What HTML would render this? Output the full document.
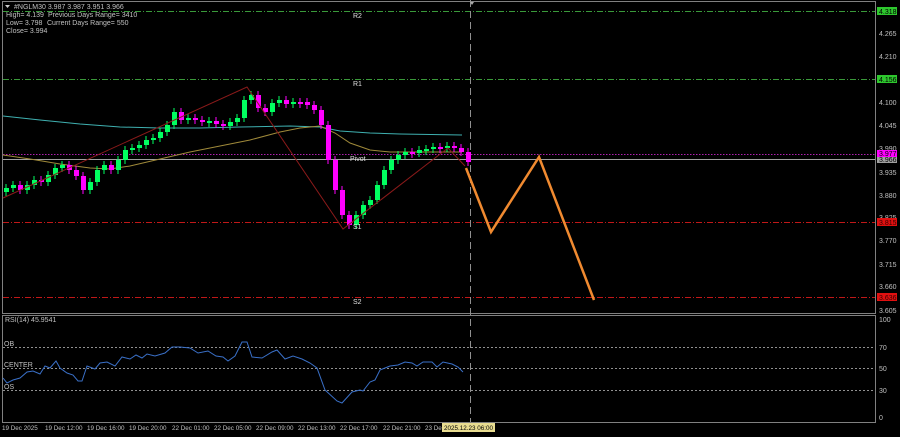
<!DOCTYPE html>
<html><head><meta charset="utf-8"><style>
html,body{margin:0;padding:0;background:#000;width:900px;height:437px;overflow:hidden}
svg{display:block;font-family:"Liberation Sans",Tahoma,sans-serif}
text{fill:#c0c0c0;font-size:7px}
.t text{font-size:6.3px}
</style></head><body>
<svg id="s" width="900" height="437" viewBox="0 0 900 437">
<rect width="900" height="437" fill="#000"/>
<rect x="2.5" y="1.5" width="873" height="312" fill="none" stroke="#808080" stroke-width="1"/>
<rect x="2.5" y="315.5" width="873" height="107" fill="none" stroke="#808080" stroke-width="1"/>
<g stroke-width="1" fill="none">
<line x1="3" y1="11.5" x2="875" y2="11.5" stroke="#3a9a3a" stroke-dasharray="6,2,1,2"/>
<line x1="3" y1="79.5" x2="875" y2="79.5" stroke="#3a9a3a" stroke-dasharray="6,2,1,2"/>
<line x1="3" y1="154.5" x2="875" y2="154.5" stroke="#b020b0" stroke-dasharray="1.5,1.5"/>
<line x1="3" y1="159.5" x2="875" y2="159.5" stroke="#a0a0a0"/>
<line x1="3" y1="222.5" x2="875" y2="222.5" stroke="#c01818" stroke-dasharray="6,2,1,2"/>
<line x1="3" y1="297.5" x2="875" y2="297.5" stroke="#c01818" stroke-dasharray="6,2,1,2"/>
<line x1="470.5" y1="0" x2="470.5" y2="422" stroke="#909090" stroke-dasharray="7,4"/>
<line x1="3" y1="347.5" x2="875" y2="347.5" stroke="#909090" stroke-dasharray="2,2"/>
<line x1="3" y1="368.5" x2="875" y2="368.5" stroke="#909090" stroke-dasharray="2,2"/>
<line x1="3" y1="390.5" x2="875" y2="390.5" stroke="#909090" stroke-dasharray="2,2"/>
</g>
<polygon points="470,2 474,2 472,5" fill="#aaa"/>
<polyline fill="none" stroke="#3fb0b0" stroke-width="1" points="3,116 40,120 80,124 120,127 160,128 200,128 240,127 290,126 320,127 340,131 370,133 400,134 462,135"/>
<polyline fill="none" stroke="#a08a3a" stroke-width="1" points="3,155 30,159 60,164 90,168 110,169 130,166 160,159 190,152 220,146 250,140 280,132 300,128 320,126 335,133 350,143 370,150 390,152 430,152 462,152"/>
<g id="candles"></g>
<polyline fill="none" stroke="#8b1a1a" stroke-width="1" points="3,198 247,87 343,229 448,148 465,166"/>
<polyline fill="none" stroke="#f08a30" stroke-width="2.5" points="466,168 491,232 539,157 594,300"/>
<text x="353" y="18" style="fill:#e0e0e0">R2</text>
<text x="353" y="86" style="fill:#e0e0e0">R1</text>
<text x="350" y="161" style="fill:#e0e0e0">Pivot</text>
<text x="353" y="229" style="fill:#e0e0e0">S1</text>
<text x="353" y="304" style="fill:#e0e0e0">S2</text>
<polygon points="5,5 10,5 7.5,8" fill="#ccc"/>
<text x="14" y="9">#NGLM30  3.987 3.987 3.951 3.966</text>
<text x="6" y="17">High= 4.139</text><text x="48" y="17">Previous Days Range= 3410</text>
<text x="6" y="25">Low= 3.798</text><text x="47" y="25">Current Days Range= 550</text>
<text x="6" y="33">Close= 3.994</text>
<g>
<text x="879" y="36">4.265</text><text x="879" y="59">4.210</text>
<text x="879" y="105">4.100</text><text x="879" y="128">4.045</text>
<text x="879" y="151">3.990</text><text x="879" y="175">3.935</text>
<text x="879" y="198">3.880</text><text x="879" y="220">3.825</text>
<text x="879" y="243">3.770</text><text x="879" y="267">3.715</text>
<text x="879" y="289">3.660</text><text x="879" y="313">3.605</text>
<rect x="877" y="7" width="20" height="8" fill="#2ec82e"/><text x="879" y="14" style="fill:#000">4.318</text>
<rect x="877" y="75" width="20" height="8" fill="#2ec82e"/><text x="879" y="82" style="fill:#000">4.156</text>
<rect x="877" y="150" width="20" height="7" fill="#ff00ff"/><text x="879" y="156" style="fill:#000">3.977</text>
<rect x="877" y="157" width="20" height="6" fill="#a0a0a0"/><text x="879" y="162" style="fill:#000">3.966</text>
<rect x="877" y="218" width="20" height="8" fill="#e01010"/><text x="879" y="225" style="fill:#300">3.815</text>
<rect x="877" y="293" width="20" height="8" fill="#e01010"/><text x="879" y="300" style="fill:#300">3.636</text>
<text x="879" y="322">100</text><text x="879" y="350">70</text>
<text x="879" y="371">50</text><text x="879" y="393">30</text><text x="879" y="420">0</text>
</g>
<text x="5" y="322">RSI(14) 45.9541</text>
<text x="4" y="346">OB</text><text x="4" y="367">CENTER</text><text x="4" y="389">OS</text>
<polyline fill="none" stroke="#3a70c8" stroke-width="1" points="3,378 7,383 13,380 20,378 27,372 33,371 40,374 45,366 50,368 56,361 60,368 67,373 73,375 78,381 82,381 87,366 95,369 100,363 107,362 115,366 122,357 130,359 136,355 142,358 147,354 155,356 165,353 172,347 180,347 190,348 198,353 208,351 216,356 223,357 228,361 235,356 242,342 247,342 252,357 262,358 272,352 277,350 285,359 293,356 302,359 310,363 317,368 325,390 337,401 342,403 352,392 360,390 363,391 370,382 375,380 380,370 390,366 398,365 405,362 412,363 417,366 423,362 432,362 437,367 443,362 452,364 458,367 463,372"/>
<g class="t">
<text x="2" y="430">19 Dec 2025</text><text x="45" y="430">19 Dec 12:00</text>
<text x="87" y="430">19 Dec 16:00</text><text x="129" y="430">19 Dec 20:00</text>
<text x="172" y="430">22 Dec 01:00</text><text x="214" y="430">22 Dec 05:00</text>
<text x="256" y="430">22 Dec 09:00</text><text x="298" y="430">22 Dec 13:00</text>
<text x="340" y="430">22 Dec 17:00</text><text x="383" y="430">22 Dec 21:00</text>
<text x="425" y="430">23 Dec</text>
<rect x="442" y="423" width="53" height="9" fill="#e8dc90"/>
<text x="444" y="430" style="fill:#000">2025.12.23 06:00</text>
</g>
</svg>
<script>
var c=[188,185,190,185,180,182,175,168,165,170,176,190,182,170,165,170,160,150,148,145,140,138,132,125,112,120,118,120,122,121,124,126,122,118,100,95,108,112,103,100,104,102,102,105,110,125,160,190,215,225,215,205,200,185,170,160,155,152,153,150,149,147,148,146,148,152,162];
var g=document.getElementById('candles'),h='',prev=192;
for(var i=0;i<c.length;i++){var x=6+i*7,o=prev,cl=c[i],t=Math.min(o,cl),b=Math.max(o,cl);
if(b-t<2)b=t+2;var col=cl<o?'#00ff60':'#ff00ff';
h+='<line x1="'+x+'" x2="'+x+'" y1="'+(t-4)+'" y2="'+(b+4)+'" stroke="'+col+'" stroke-width="1"/>';
h+='<rect x="'+(x-2)+'" y="'+t+'" width="5" height="'+(b-t)+'" fill="'+col+'"/>';prev=cl;}
g.innerHTML=h;
</script>
</body></html>
